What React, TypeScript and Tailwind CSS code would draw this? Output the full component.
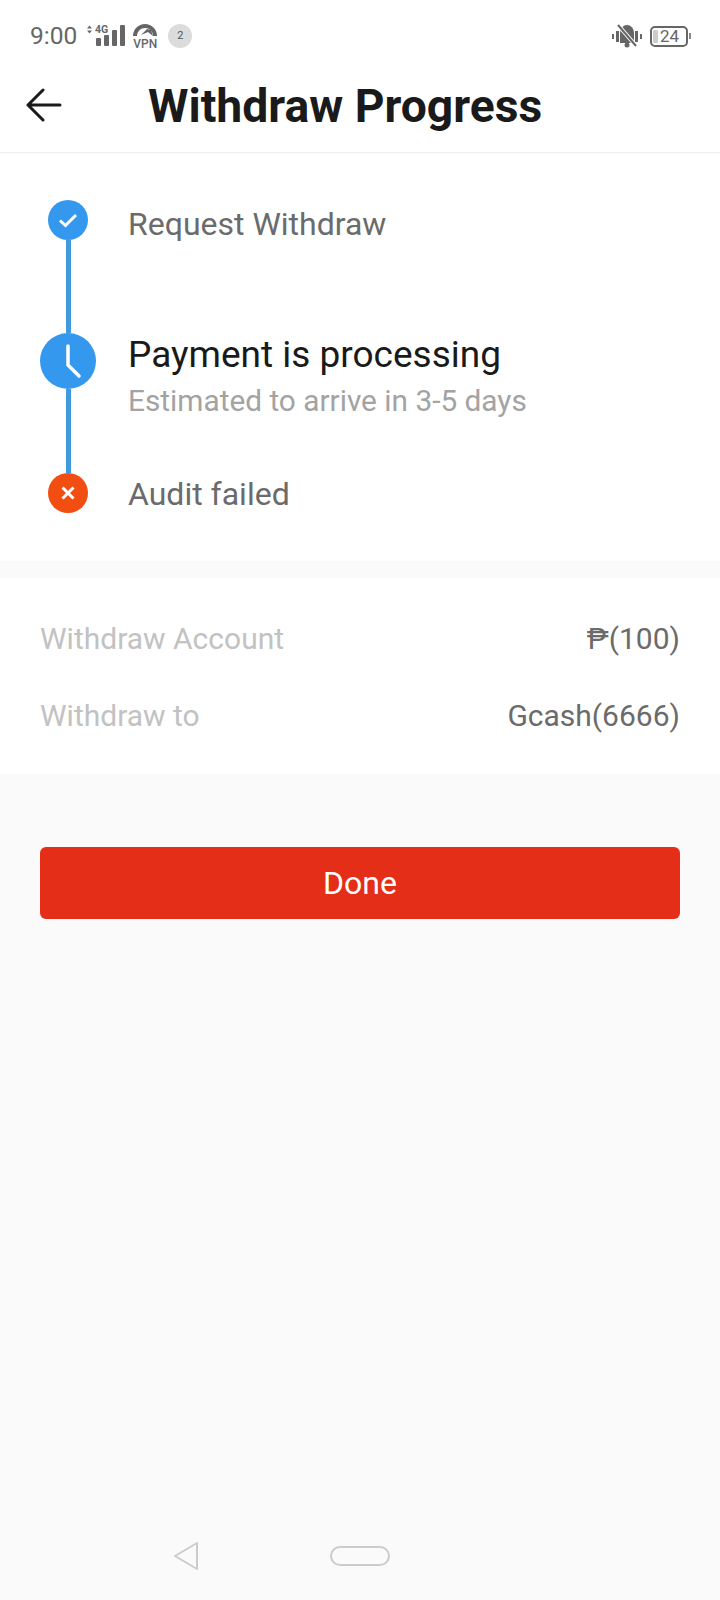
const font = { fontFamily: "Roboto, sans-serif" };

function StatusBar() {
  return (
    <div className="h-[70px] flex items-center justify-between pl-[30px] pr-[28px] pt-[2px] text-[#666666]">
      <div className="flex items-center">
        <span className="text-[24.5px] leading-none">9:00</span>
        <svg width="40" height="24" viewBox="0 0 40 24" className="ml-[9px]" fill="#666666">
          <path d="M1 4.5 L3.5 1.5 L6 4.5 Z M1 6.5 L6 6.5 L3.5 9.5 Z" />
          <text x="9" y="9" fontSize="10.5" fontWeight="700" fontFamily="Roboto">4G</text>
          <rect x="10" y="14" width="5" height="8" rx="1" />
          <rect x="18" y="11" width="5" height="11" rx="1" />
          <rect x="26" y="6" width="5" height="16" rx="1" />
          <rect x="34" y="1" width="5" height="21" rx="1" />
        </svg>
        <svg width="26" height="26" viewBox="0 0 26 26" className="ml-[6px]" fill="#666666">
          <path d="M1 13 A12 12 0 0 1 25 13 L21 13 A8 8 0 0 0 5 13 Z" />
          <path d="M9 12 L15 6 L19 7 L21 13 L16 9 Z" />
        </svg>
        <span className="-ml-[26px] mt-[15px] w-[26px] text-center text-[12px] leading-[12px] font-medium text-[#666666]">VPN</span>
        <span className="ml-[10px] w-[24px] h-[24px] rounded-full bg-[#dcdcdc] flex items-center justify-center text-[11px] text-[#555555]">2</span>
      </div>
      <div className="flex items-center pr-[1px]">
        <svg width="30" height="26" viewBox="0 0 30 26" fill="#666666">
          <rect x="0" y="11" width="2" height="5" />
          <rect x="4" y="8" width="3" height="11" />
          <rect x="23" y="8" width="3" height="11" />
          <rect x="28" y="11" width="2" height="5" />
          <path d="M8 20 L8 10 A7 8 0 0 1 22 10 L22 20 Z" />
          <circle cx="15" cy="22" r="2.5" />
          <path d="M6 2 L25 24" stroke="#ffffff" strokeWidth="4" />
          <path d="M6 2 L24 23" stroke="#666666" strokeWidth="2" />
        </svg>
        <div className="ml-[8px] w-[38px] h-[21px] rounded-[5px] border-2 border-[#666666] flex items-center pl-[1px]">
          <span className="w-[5px] h-[13px] bg-[#cccccc] rounded-[1px]" />
          <span className="text-[17px] leading-none ml-[2px] text-[#666666]">24</span>
        </div>
        <span className="w-[2px] h-[6px] bg-[#888888] ml-[1px]" />
      </div>
    </div>
  );
}

export default function App() {
  return (
    <div style={font} className="w-[720px] h-[1600px] bg-[#fafafa] flex flex-col">
      <div className="bg-white">
        <StatusBar />
        <div className="h-[83px] border-b border-[#eeeeee] flex items-center">
          <svg width="36" height="34" viewBox="0 0 36 34" fill="none" stroke="#1a1a1a" strokeWidth="3" strokeLinecap="round" strokeLinejoin="round" className="ml-[26px] -mt-[12px] shrink-0">
            <path d="M34 17 L2 17 M17 2 L2 17 L17 32" />
          </svg>
          <h1 className="ml-[86px] text-[46.25px] leading-none font-bold text-[#1a1a1a] -mt-[10px]">Withdraw Progress</h1>
        </div>
      </div>

      <div className="bg-white h-[408px] flex pl-[40px] pt-[47px]">
        <div className="w-[56px] flex flex-col items-center">
          <span className="w-[40px] h-[40px] rounded-full bg-[#3498ee] flex items-center justify-center shrink-0">
            <svg width="22" height="22" viewBox="0 0 22 22" fill="none" stroke="#ffffff" strokeWidth="3">
              <path d="M3 11.5 L8.5 16.5 L19 6" />
            </svg>
          </span>
          <span className="w-[5px] h-[93px] bg-[#3f9bd9]" />
          <span className="w-[56px] h-[56px] rounded-full bg-[#3498ee] flex items-center justify-center shrink-0">
            <svg width="56" height="56" viewBox="0 0 56 56" fill="none" stroke="#ffffff" strokeWidth="3.5" strokeLinecap="round">
              <path d="M28 13 L28 32 L39 43" />
            </svg>
          </span>
          <span className="w-[5px] h-[84px] bg-[#3f9bd9]" />
          <span className="w-[40px] h-[40px] rounded-full bg-[#f24e12] flex items-center justify-center shrink-0">
            <svg width="18" height="18" viewBox="0 0 18 18" fill="none" stroke="#ffffff" strokeWidth="3">
              <path d="M3.5 3.5 L14.5 14.5 M14.5 3.5 L3.5 14.5" />
            </svg>
          </span>
        </div>
        <div className="ml-[32px] flex flex-col">
          <p className="text-[32px] leading-[38px] text-[#6b6b6b] mt-[5px]">Request Withdraw</p>
          <p className="text-[37px] leading-[42px] text-[#1a1a1a] mt-[91px]">Payment is processing</p>
          <p className="text-[29.8px] leading-[34px] text-[#a3a3a3] mt-[8px]">Estimated to arrive in 3-5 days</p>
          <p className="text-[32px] leading-[38px] text-[#6b6b6b] mt-[57px]">Audit failed</p>
        </div>
      </div>

      <div className="mt-[17px] bg-white h-[196px] px-[40px] pt-[42px] flex flex-col gap-[40px]">
        <div className="flex justify-between items-center h-[37px] text-[30px]">
          <span className="text-[#c2c2c2]">Withdraw Account</span>
          <span className="text-[#6b6b6b]">₱(100)</span>
        </div>
        <div className="flex justify-between items-center h-[37px] text-[30px]">
          <span className="text-[#c2c2c2]">Withdraw to</span>
          <span className="text-[#6b6b6b]">Gcash(6666)</span>
        </div>
      </div>

      <div className="mt-[73px] mx-[40px] h-[72px] rounded-[6px] bg-[#e52e17] flex items-center justify-center text-white text-[32px]">
        Done
      </div>

      <div className="mt-auto mb-[29px] flex items-center pl-[173px]">
        <svg width="26" height="30" viewBox="0 0 26 30" fill="none" stroke="#cccccc" strokeWidth="2" strokeLinejoin="round">
          <path d="M24 2 L24 28 L2 15 Z" />
        </svg>
        <span className="ml-[131px] w-[60px] h-[20px] rounded-full border-2 border-[#cccccc]" />
      </div>
    </div>
  );
}
